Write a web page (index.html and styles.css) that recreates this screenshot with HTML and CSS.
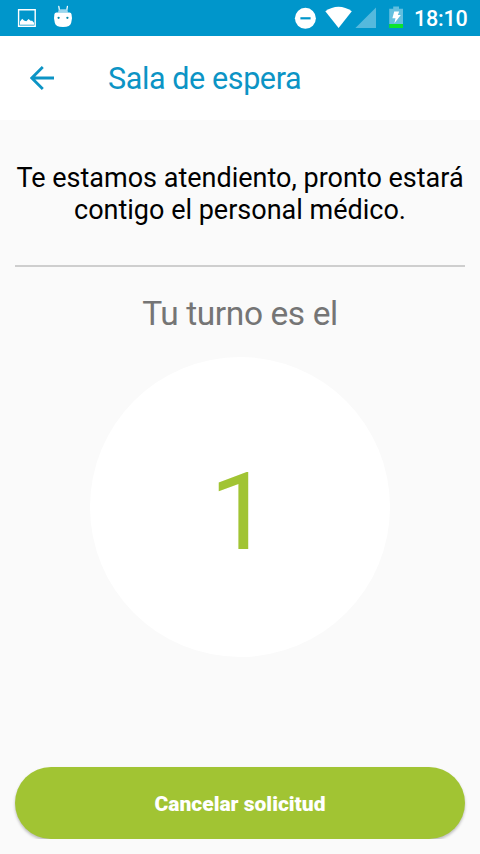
FILE: index.html
```html
<!DOCTYPE html>
<html lang="es">
<head>
<meta charset="utf-8">
<title>Sala de espera</title>
<link rel="stylesheet" href="styles.css">
</head>
<body>
<div class="screen">
  <div class="status">
    <svg class="status-icons" width="80" height="36" viewBox="0 0 80 36">
      <path fill="none" stroke="#fff" stroke-width="1.4" d="M18.6 9.8H35.2V26.2H18.6Z"/>
      <path fill="#fff" d="M20 24.8V21.5L22.2 18.8L24 20.5L26.3 21.2L28.6 19L30.6 20.8L32.2 20.8L34 22.8V24.8Z"/>
      <path stroke="#fff" stroke-width="1.3" stroke-linecap="round" d="M58.8 6.5L59.4 10M67.4 6.5L66.8 10"/>
      <path fill="#9bd6ed" d="M58 12.6Q58.3 9.2 60.5 9.2H65.5Q67.8 9.2 68 12.6Z"/>
      <path fill="#fff" d="M54.4 14.2Q54.6 12.6 56.5 12.6H69.5Q71.3 12.6 71.5 14.2L72 18.2L71.2 22.8Q70.5 27 63 27Q55.4 27 54.8 22.8L54 18.2Z"/>
      <circle fill="#0086a8" cx="58.6" cy="17.8" r="1.15"/>
      <circle fill="#0086a8" cx="67.4" cy="17.8" r="1.15"/>
    </svg>
    <div class="status-right">
      <svg width="120" height="36" viewBox="290 0 120 36">
        <circle cx="305.4" cy="18.3" r="10.5" fill="#fff"/>
        <path d="M300.4 18.3H310.6" stroke="#0096cb" stroke-width="2.2"/>
        <path fill="#fff" d="M325.3 11.3C333.5 5.2 343.5 5.2 351.8 11.3L338.6 28Z"/>
        <path fill="#55b9dd" d="M376 7.5V28H355.4Z"/>
        <path fill="#63bfdf" d="M393.2 6.5H399V8.8H403V24H389.2V8.8H393.2Z"/>
        <path fill="#0be52d" d="M389.2 24H403V28H389.2Z"/>
        <path fill="#fff" d="M394.2 11.5H399.2L397.8 15H400.8L394.4 23.2L395.5 18.2H392.4Z"/>
      </svg>
      <span class="clock">18:10</span>
    </div>
  </div>
  <header class="toolbar">
    <svg class="back" width="24" height="24" viewBox="0 0 24 24">
      <path fill="none" stroke="#0c94c5" stroke-width="2.8" d="M24 12H2M12.8 1L1.8 12L12.8 23"/>
    </svg>
    <h1 class="title">Sala de espera</h1>
  </header>
  <main class="content">
    <p class="message">Te estamos atendiento, pronto estará<br>contigo el personal médico.</p>
    <div class="divider"></div>
    <p class="turn">Tu turno es el</p>
    <div class="circle"><span class="number">1</span></div>
  </main>
  <footer class="footer">
    <button class="cancel">Cancelar solicitud</button>
  </footer>
</div>
</body>
</html>
```
FILE: styles.css
```css
* { box-sizing: border-box; }
body { margin: 0; font-family: Roboto, sans-serif; }
h1, p { margin: 0; font-weight: 400; }
svg { display: block; }
.screen {
  width: 480px;
  height: 854px;
  display: flex;
  flex-direction: column;
  background: #fafafa;
  overflow: hidden;
}
.status {
  height: 36px;
  display: flex;
  justify-content: space-between;
  background: #0096cb;
  color: #fff;
}
.status-right { display: flex; width: 190px; }
.clock {
  margin-left: 4px;
  font-size: 21.5px;
  letter-spacing: -0.2px;
  font-weight: 500;
  line-height: 38px;
  white-space: nowrap;
}
.toolbar {
  height: 84px;
  padding-left: 30px;
  display: flex;
  align-items: center;
  gap: 54px;
  background: #fff;
}
.title {
  padding-top: 2px;
  font-size: 30.5px;
  line-height: 36px;
  letter-spacing: -0.4px;
  color: #0c94c5;
  white-space: nowrap;
}
.content {
  flex: 1;
  display: flex;
  flex-direction: column;
  align-items: center;
  padding: 42px 15px 0;
}
.message {
  font-size: 27px;
  line-height: 32px;
  color: #000;
  text-align: center;
  white-space: nowrap;
}
.divider { width: 100%; height: 2px; margin-top: 39px; background: #cecece; }
.turn {
  margin-top: 27px;
  font-size: 33.5px;
  line-height: 40px;
  letter-spacing: -0.4px;
  color: #757575;
}
.circle {
  width: 300px;
  height: 300px;
  margin-top: 23px;
  padding-top: 10px;
  border-radius: 50%;
  display: flex;
  align-items: center;
  justify-content: center;
  background: #fff;
}
.number { font-size: 108px; line-height: 126px; color: #a1c433; }
.footer { height: 84px; margin-bottom: 15px; padding: 12px 15px 0; overflow: hidden; }
.cancel {
  display: block;
  width: 100%;
  height: 72px;
  padding: 2px 0 0;
  border: 0;
  border-radius: 36px;
  background: #a1c433;
  color: #fff;
  font: 900 21px/25px Roboto, sans-serif;
  box-shadow: 0 2px 3px rgba(0, 0, 0, 0.25);
}
```
